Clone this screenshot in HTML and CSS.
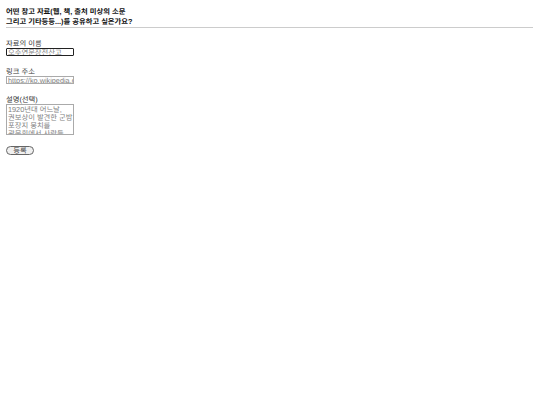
FILE: index.html
```html
<!DOCTYPE html>
<html>
	<head>
		<meta charset="UTF-8">
		<title>참고 자료 등록</title>
		<link rel="stylesheet" href="styles.css">
	</head>
	<body>
		<h1 class="title">어떤 참고 자료(웹, 책, 출처 미상의 소문<br>그리고 기타등등...)를 공유하고 싶은가요?</h1>
		<form class="form" onsubmit="return false">
			<div class="field">
				<label class="label">자료의 이름</label>
				<input type="text" class="inp inp-focus" placeholder="오주연문장전산고">
			</div>
			<div class="field">
				<label class="label">링크 주소</label>
				<input type="text" class="inp" placeholder="https://ko.wikipedia.org">
			</div>
			<div class="field">
				<label class="label">설명(선택)</label>
				<textarea class="inp inparea" placeholder="1920년대 어느날,&#10;권보상이 발견한 군밤&#10;포장지 뭉치를&#10;광문회에서 사람들과..."></textarea>
			</div>
			<button type="submit" class="btn">등록</button>
		</form>
	</body>
</html>
```
FILE: styles.css
```css
*{padding:0;margin:0;box-sizing:border-box;}
body{margin:0 7px 0 6px;font-size:7.3px;font-family:"Liberation Sans","Noto Sans CJK KR",sans-serif;color:#333;background:#fff;text-rendering:geometricPrecision;}
input,textarea,button{font-family:inherit;font-size:7.3px;outline:none;text-rendering:geometricPrecision;}
.title{font-size:7.3px;line-height:10px;font-weight:bold;color:#111;padding-top:7px;border-bottom:1px solid #ccc;}
.form{display:flex;flex-direction:column;align-items:flex-start;padding-top:11px;}
.field{display:flex;flex-direction:column;margin-bottom:11px;}
.label{line-height:9px;}
.inp{width:68px;height:8px;border:1px solid #aaa;padding:0 0 0 1px;line-height:7px;}
.inp::placeholder{color:#808080;opacity:1;}
.inp-focus{border:1px solid #222;border-radius:1px;}
.inparea{height:31px;padding-top:1px;resize:none;line-height:8px;overflow:hidden;}
.btn{width:28px;height:9px;line-height:7px;border:1px solid #666;border-radius:5px;background:#f0f0f0;color:#444;}
```
